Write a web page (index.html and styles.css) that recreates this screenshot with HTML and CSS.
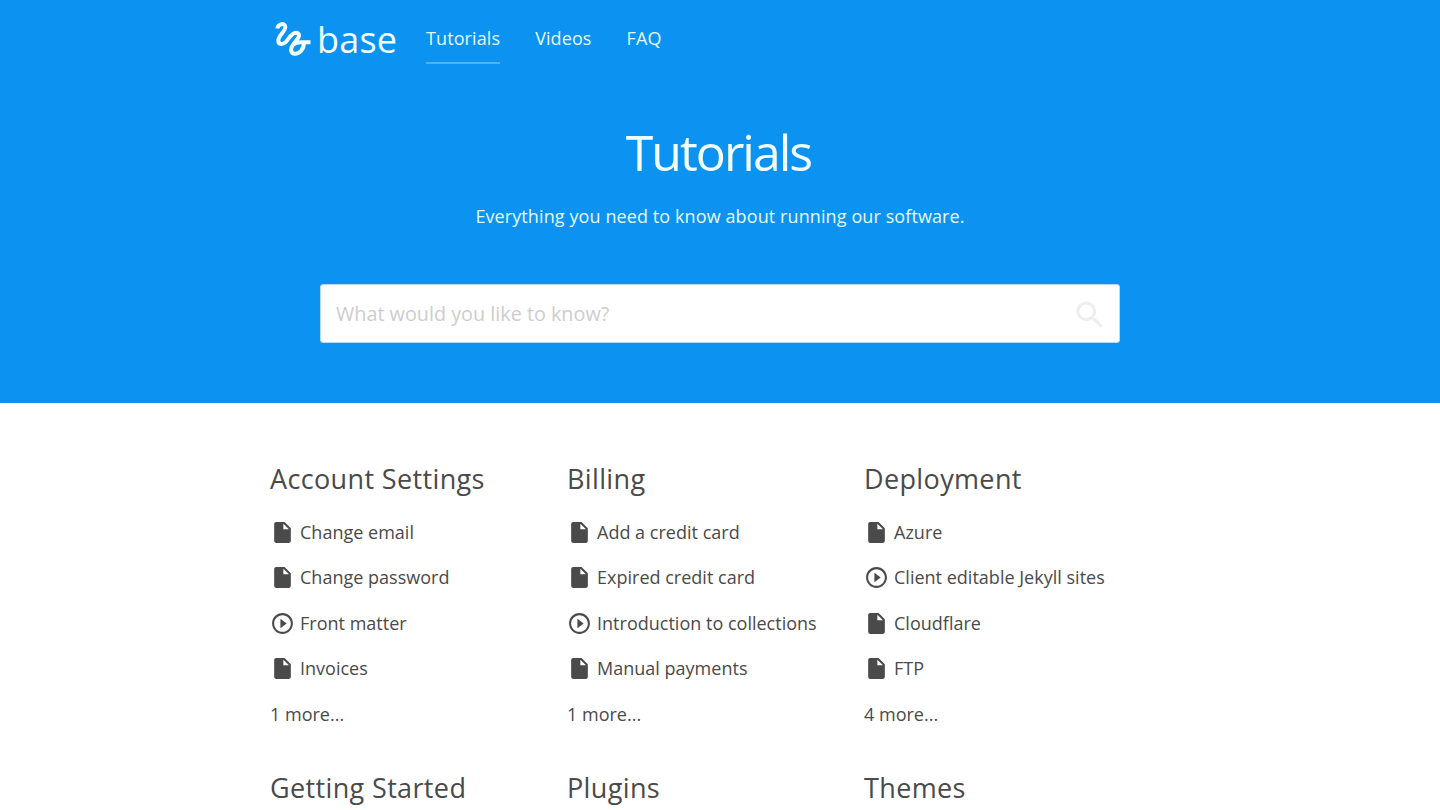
FILE: index.html
```html
<!DOCTYPE html>
<html lang="en">
<head>
  <meta charset="UTF-8">
  <title>Base - Tutorials</title>
  <meta name="viewport" content="width=device-width, initial-scale=1.0">
  <link rel="stylesheet" href="styles.css">
</head>
<body>
  <svg class="sprite" xmlns="http://www.w3.org/2000/svg">
    <symbol id="icon-file" viewBox="0 0 24 24">
      <path fill-rule="evenodd" d="M6 2C4.900 2 4 2.900 4 4V20C4 21.100 4.900 22 6 22H18C19.100 22 20 21.100 20 20V8L14 2ZM12.800 3.700L18.200 8.900H12.800Z"/>
    </symbol>
    <symbol id="icon-play" viewBox="0 0 24 24">
      <path d="M10 16.500l6-4.500-6-4.500v9zM12 2C6.480 2 2 6.480 2 12s4.480 10 10 10 10-4.480 10-10S17.520 2 12 2zm0 18c-4.410 0-8-3.590-8-8s3.590-8 8-8 8 3.590 8 8-3.590 8-8 8z"/>
    </symbol>
  </svg>

  <header>
    <nav class="container">
      <a class="logo" href="#">
        <svg class="logo-mark" viewBox="0 0 46 46"><path d="M7.300 12.500C8 7.500 15.300 6.500 15.300 11C15.300 15.500 8.300 19.500 8.300 24.500C8.300 29 13 29 15.800 26C19 22.500 21.500 16.800 26 16.800C32.500 17.500 27 24 23.500 28C20.500 31.500 20 36 23.500 37.600C29 39 34.500 33 33.700 26.500M22.800 29C25 27 28 26.300 31 26.300H40.500"/></svg>
        <span>base</span>
      </a>
      <a class="active" href="#">Tutorials</a>
      <a href="#">Videos</a>
      <a href="#">FAQ</a>
    </nav>
    <section class="hero">
      <h1>Tutorials</h1>
      <p>Everything you need to know about running our software.</p>
      <form class="search">
        <input type="search" placeholder="What would you like to know?">
        <button type="button" aria-label="Search"><svg viewBox="0 0 24 24"><path d="M15.500 14h-.790l-.280-.270C15.410 12.590 16 11.110 16 9.500 16 5.910 13.090 3 9.500 3S3 5.910 3 9.500 5.910 16 9.500 16c1.610 0 3.090-.590 4.230-1.570l.270.280v.790l5 4.990L20.490 19l-4.990-5zm-6 0C7.010 14 5 11.990 5 9.500S7.010 5 9.500 5 14 7.010 14 9.500 11.990 14 9.500 14z"/></svg></button>
      </form>
    </section>
  </header>

  <main class="container grid">
    <section class="category">
      <h2>Account Settings</h2>
      <ul>
        <li><a href="#"><svg class="icon"><use href="#icon-file"/></svg>Change email</a></li>
        <li><a href="#"><svg class="icon"><use href="#icon-file"/></svg>Change password</a></li>
        <li><a href="#"><svg class="icon"><use href="#icon-play"/></svg>Front matter</a></li>
        <li><a href="#"><svg class="icon"><use href="#icon-file"/></svg>Invoices</a></li>
        <li><a href="#">1 more...</a></li>
      </ul>
    </section>
    <section class="category">
      <h2>Billing</h2>
      <ul>
        <li><a href="#"><svg class="icon"><use href="#icon-file"/></svg>Add a credit card</a></li>
        <li><a href="#"><svg class="icon"><use href="#icon-file"/></svg>Expired credit card</a></li>
        <li><a href="#"><svg class="icon"><use href="#icon-play"/></svg>Introduction to collections</a></li>
        <li><a href="#"><svg class="icon"><use href="#icon-file"/></svg>Manual payments</a></li>
        <li><a href="#">1 more...</a></li>
      </ul>
    </section>
    <section class="category">
      <h2>Deployment</h2>
      <ul>
        <li><a href="#"><svg class="icon"><use href="#icon-file"/></svg>Azure</a></li>
        <li><a href="#"><svg class="icon"><use href="#icon-play"/></svg>Client editable Jekyll sites</a></li>
        <li><a href="#"><svg class="icon"><use href="#icon-file"/></svg>Cloudflare</a></li>
        <li><a href="#"><svg class="icon"><use href="#icon-file"/></svg>FTP</a></li>
        <li><a href="#">4 more...</a></li>
      </ul>
    </section>
    <section class="category">
      <h2>Getting Started</h2>
    </section>
    <section class="category">
      <h2>Plugins</h2>
    </section>
    <section class="category">
      <h2>Themes</h2>
    </section>
  </main>
</body>
</html>
```

FILE: styles.css
```css
* { box-sizing: border-box; }
html, body { margin: 0; padding: 0; }
body {
  font-family: "Open Sans", sans-serif; font-size: 18px; font-weight: 400;
  letter-spacing: 0.1px; color: #4a4a4a; background: #fff;
}
a { color: inherit; text-decoration: none; }
h1, h2, p, ul { margin: 0; padding: 0; font-weight: 400; }
ul { list-style: none; }
.sprite { display: none; }
.container { width: 900px; margin: 0 auto; }

header { height: 403px; background: #0c92f0; color: #e4fbff; }
nav { display: flex; align-items: flex-start; height: 80px; }
nav a { margin: 14px 35px 0 0; height: 50px; line-height: 49px; }
nav a.active { border-bottom: 2px solid #50b3f6; }
nav .logo {
  display: flex; width: 156px; height: 50px; margin: 15px 0 0;
  font-size: 36px; letter-spacing: 0.2px; color: #f2fdff;
}
.logo-mark { width: 46px; height: 46px; margin: 1px 1px 0 0; fill: none; stroke: #f2fdff; stroke-width: 4; }

.hero { display: flex; flex-direction: column; align-items: center; padding-top: 37px; }
.hero h1 { padding-right: 3px; font-size: 50px; line-height: 70px; letter-spacing: -2px; color: #f2fdff; }
.hero p { margin-top: 15px; line-height: 28px; }
.search {
  display: flex; align-items: center; width: 800px; height: 59px; margin-top: 54px;
  background: #fff; border: 1px solid #b4dcfa; border-radius: 3px;
}
.search input {
  flex: 1; padding: 0 15px; border: 0; outline: 0; background: none;
  font: 400 19.800px "Open Sans", sans-serif; letter-spacing: 0;
}
.search input::placeholder { color: #cdcdcd; }
.search button { display: flex; padding: 0; margin: 2px 11px 0 0; border: 0; background: none; }
.search button svg { width: 36px; height: 36px; fill: #eee; }

.grid { display: grid; grid-template-columns: repeat(3, 297px); row-gap: 31px; padding-top: 56px; }
.category h2 { height: 40px; font-size: 27px; line-height: 40px; letter-spacing: 0.360px; }
.category ul { margin-top: 11px; letter-spacing: 0.010px; }
.category li { height: 45.400px; line-height: 45.400px; }
.category li a { display: flex; align-items: center; }
.icon { width: 25px; height: 25px; margin: 0 5px 0.800px 0; fill: #4a4a4a; }
```
